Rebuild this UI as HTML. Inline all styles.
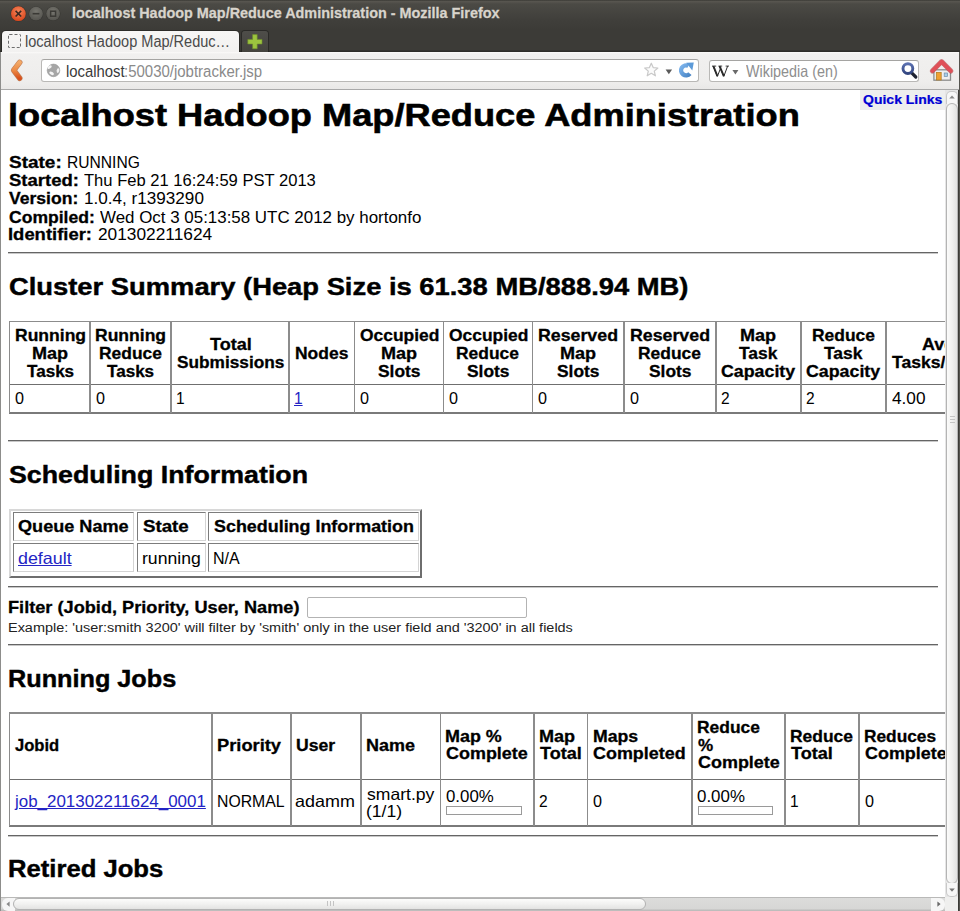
<!DOCTYPE html>
<html><head><meta charset="utf-8">
<title>localhost Hadoop Map/Reduce Administration</title>
<style>
html,body{margin:0;padding:0;width:960px;height:911px;overflow:hidden;background:#3c3b37;font-family:"Liberation Sans",sans-serif}
.b{position:absolute}
.t{position:absolute;white-space:pre;transform-origin:0 50%;font-family:"Liberation Sans",sans-serif}
.sv{position:absolute;overflow:visible}
#vp{position:absolute;left:1px;top:90px;width:944.4px;height:807px;overflow:hidden;background:#fff}
#pg{position:absolute;left:-1px;top:-90px;width:1100px;height:911px}
</style></head><body>
<!-- title bar -->
<div class="b" style="left:0;top:0;width:960px;height:52px;background:linear-gradient(#3a3935 0px,#57554f 1.5px,#4b4a45 4px,#403f3b 20px,#3c3b37 30px,#3c3b37 50px,#2e2d29 51px,#2e2d29 52px)"></div>
<!-- window buttons -->
<svg class="sv" style="left:0;top:0" width="70" height="30" viewBox="0 0 70 30">
 <defs>
  <radialGradient id="gc" cx="50%" cy="35%" r="65%"><stop offset="0" stop-color="#f7875c"/><stop offset="1" stop-color="#d8461c"/></radialGradient>
  <radialGradient id="gg" cx="50%" cy="35%" r="65%"><stop offset="0" stop-color="#77766f"/><stop offset="1" stop-color="#54534e"/></radialGradient>
 </defs>
 <circle cx="18.4" cy="13.7" r="7.9" fill="#2a2926" opacity="0.6"/>
 <circle cx="18.4" cy="13.7" r="7.4" fill="url(#gc)"/>
 <path d="M15.6 10.9 L21.2 16.5 M21.2 10.9 L15.6 16.5" stroke="#3b2a22" stroke-width="1.6"/>
 <circle cx="36" cy="13.7" r="7.3" fill="#2a2926" opacity="0.6"/>
 <circle cx="36" cy="13.7" r="6.9" fill="url(#gg)"/>
 <path d="M32.6 13.7 L39.4 13.7" stroke="#3a3935" stroke-width="1.6"/>
 <circle cx="53.1" cy="13.7" r="7.3" fill="#2a2926" opacity="0.6"/>
 <circle cx="53.1" cy="13.7" r="6.9" fill="url(#gg)"/>
 <rect x="50.6" y="11.2" width="5" height="5" fill="none" stroke="#3a3935" stroke-width="1.5"/>
</svg>
<!-- tab -->
<div class="b" style="left:2px;top:30.5px;width:237.4px;height:22px;border-radius:4px 4px 0 0;background:linear-gradient(#f7f6f5,#f2f1f0);box-shadow:0 0 0 1px rgba(30,30,28,0.5)"></div>
<div class="b" style="left:7.5px;top:34px;width:13.5px;height:13.5px;border:1.2px dashed #6d6d6d;box-sizing:border-box;border-radius:1.5px"></div>
<!-- new tab button -->
<div class="b" style="left:241.9px;top:30.6px;width:26.1px;height:21.4px;border-radius:3px 3px 0 0;background:linear-gradient(#4e4d49,#45443f);box-shadow:0 0 0 1px rgba(30,30,28,0.6)"></div>
<svg class="sv" style="left:246px;top:33px" width="18" height="18" viewBox="0 0 18 18">
 <path d="M6.6 1.6 H11.2 V6.4 H16 V11 H11.2 V15.8 H6.6 V11 H1.8 V6.4 H6.6 Z" fill="#9dc43f" stroke="#6f8f2a" stroke-width="0.6"/>
</svg>
<!-- nav bar -->
<div class="b" style="left:0;top:52px;width:960px;height:38px;background:linear-gradient(#fbfaf9 0px,#f1f0ef 2px,#eeedec 30px,#e9e8e7 37px,#a9a9a9 37px,#a9a9a9 38px)"></div>
<!-- back arrow -->
<svg class="sv" style="left:8px;top:58px" width="20" height="26" viewBox="0 0 20 26">
 <defs><linearGradient id="ga" x1="0" y1="0" x2="0" y2="1"><stop offset="0" stop-color="#f2a866"/><stop offset="0.5" stop-color="#ec8a45"/><stop offset="1" stop-color="#d8501c"/></linearGradient></defs>
 <path d="M11.7 4.4 L5.7 12.2 L11.7 20.2" fill="none" stroke="#b9683a" stroke-width="5.6" stroke-linecap="round" stroke-linejoin="round" opacity="0.85"/>
 <path d="M11.7 4.4 L5.7 12.2 L11.7 20.2" fill="none" stroke="url(#ga)" stroke-width="4.4" stroke-linecap="round" stroke-linejoin="round"/>
</svg>
<!-- url box -->
<div class="b" style="left:40.6px;top:59.4px;width:658.2px;height:22.6px;border:1px solid #b9b8b6;border-top-color:#a5a4a2;border-radius:3px;background:#fff;box-sizing:border-box"></div>
<svg class="sv" style="left:46px;top:63px" width="15" height="15" viewBox="0 0 15 15">
 <circle cx="7.5" cy="7.4" r="6.3" fill="#a6a6a6" stroke="#979797" stroke-width="0.6"/>
 <ellipse cx="3.6" cy="4.2" rx="2.4" ry="1.4" transform="rotate(-35 3.6 4.2)" fill="#f4f4f4"/>
 <ellipse cx="5.6" cy="10.3" rx="2.5" ry="1.5" transform="rotate(30 5.6 10.3)" fill="#f4f4f4"/>
 <ellipse cx="12" cy="7.6" rx="1.3" ry="2.4" transform="rotate(10 12 7.6)" fill="#f0f0f0"/>
</svg>
<!-- star, dropmarker, reload -->
<svg class="sv" style="left:643px;top:62px" width="17" height="17" viewBox="0 0 17 17">
 <path d="M8.3 1.2 L10.2 5.6 L14.9 6 L11.3 9.1 L12.4 13.8 L8.3 11.3 L4.2 13.8 L5.3 9.1 L1.7 6 L6.4 5.6 Z" fill="#fbfbfb" stroke="#c9c9c9" stroke-width="1.2" stroke-linejoin="round"/>
</svg>
<svg class="sv" style="left:664px;top:68px" width="10" height="8" viewBox="0 0 10 8">
 <path d="M1.6 1.6 H8.1 L4.85 6.3 Z" fill="#5a5a5a"/>
</svg>
<svg class="sv" style="left:677px;top:61px" width="19" height="19" viewBox="0 0 19 19">
 <defs><linearGradient id="gr" x1="0" y1="0" x2="1" y2="1"><stop offset="0" stop-color="#7db4ec"/><stop offset="1" stop-color="#4a86c6"/></linearGradient></defs>
 <path d="M12.9 12.6 A5 5 0 1 1 11.4 4.9" fill="none" stroke="url(#gr)" stroke-width="4.4" stroke-linecap="butt"/>
 <path d="M9.2 1.7 L16.8 1.6 L15.3 9.6 Z" fill="#5c9ad8"/>
</svg>
<!-- search box -->
<div class="b" style="left:709.2px;top:59.5px;width:210px;height:22.5px;border:1px solid #b9b8b6;border-top-color:#a5a4a2;border-radius:3px;background:#fff;box-sizing:border-box"></div>
<svg class="sv" style="left:731px;top:68px" width="10" height="8" viewBox="0 0 10 8">
 <path d="M1.4 2 H7.4 L4.4 6.6 Z" fill="#6a6a6a"/>
</svg>
<svg class="sv" style="left:899px;top:60px" width="21" height="21" viewBox="0 0 21 21">
 <defs><linearGradient id="gm" x1="0" y1="0" x2="0" y2="1"><stop offset="0" stop-color="#5b70b0"/><stop offset="1" stop-color="#334680"/></linearGradient></defs>
 <path d="M12.2 12.4 L16.8 17" stroke="#1f2433" stroke-width="3.2" stroke-linecap="round"/>
 <circle cx="8.9" cy="8.6" r="4.9" fill="#fff" stroke="url(#gm)" stroke-width="2.9"/>
</svg>
<svg class="sv" style="left:708px;top:60px" width="24" height="22" viewBox="708 60 24 22">
 <path d="M713.2 66.2 L717.4 76.4 M717.4 76.4 L720.8 67.6 M719.4 66.2 L723.8 76.4 M723.8 76.4 L727.6 66.2" stroke="#2a2a2a" stroke-width="1" fill="none"/>
 <path d="M713.4 66.2 L717.4 76.2 M719.6 66.2 L723.8 76.2" stroke="#2a2a2a" stroke-width="1.9" fill="none"/>
 <path d="M712 66.1 H716.2 M718.4 66.1 H722.2 M725.6 66.1 H729" stroke="#2a2a2a" stroke-width="0.9" fill="none"/>
</svg>
<!-- home -->
<svg class="sv" style="left:929px;top:58px" width="26" height="25" viewBox="0 0 26 25">
 <rect x="4.9" y="11.8" width="16.6" height="10.4" fill="#efefef" stroke="#8c8c8c" stroke-width="1.3"/>
 <rect x="7.3" y="14.4" width="4.9" height="7.6" fill="#f0a030" stroke="#b0781c" stroke-width="0.7"/>
 <rect x="15.2" y="15" width="3.4" height="3.4" fill="#a8d0ea" stroke="#6d8ea8" stroke-width="0.7"/>
 <path d="M3.3 13 L12.6 3.6 L21.9 13" fill="none" stroke="#a83238" stroke-width="5" stroke-linejoin="round" stroke-linecap="round" opacity="0.55"/>
 <path d="M3.5 12.9 L12.6 3.8 L21.7 12.9" fill="none" stroke="#df5058" stroke-width="4.1" stroke-linejoin="round" stroke-linecap="round"/>
</svg>
<!-- window side borders -->
<div class="b" style="left:0;top:52px;width:1px;height:859px;background:#8d8d8b"></div>
<div class="b" style="left:958.8px;top:52px;width:1.2px;height:859px;background:#55544f"></div>
<!-- vertical scrollbar -->
<div class="b" style="left:945.4px;top:90px;width:12.6px;height:807px;background:#e6e6e6"></div>
<div class="b" style="left:946.3px;top:90.5px;width:11.4px;height:13px;border:1px solid #c8c8c8;border-bottom:none;border-radius:5px 5px 0 0;box-sizing:border-box;background:#f7f7f7"></div>
<svg class="sv" style="left:946px;top:91px" width="12" height="12" viewBox="0 0 12 12"><path d="M3.2 7.6 H8.8 L6 4.6 Z" fill="#8a8a8a"/></svg>
<div class="b" style="left:946.3px;top:102.5px;width:11.6px;height:781px;border:1.2px solid #b4b4b4;border-radius:6px;box-sizing:border-box;background:linear-gradient(90deg,#fbfbfa,#f1f1f0 50%,#e2e2e1)"></div>
<div class="b" style="left:946.3px;top:883px;width:11.4px;height:14px;border:1px solid #c8c8c8;border-top:none;border-radius:0 0 5px 5px;box-sizing:border-box;background:#f7f7f7"></div>
<svg class="sv" style="left:946px;top:884px" width="12" height="12" viewBox="0 0 12 12"><path d="M3.2 4.6 H8.8 L6 7.8 Z" fill="#777"/></svg>
<!-- horizontal scrollbar -->
<div class="b" style="left:1px;top:897px;width:957px;height:14px;background:linear-gradient(#b9b9b8 0px,#b9b9b8 1px,#dcdcdb 1px,#d6d6d5 12px,#bdbdbc 13px,#bdbdbc 14px)"></div>
<div class="b" style="left:1.5px;top:898px;width:13px;height:13px;border-radius:6px 0 0 6px;background:#f6f6f6"></div>
<svg class="sv" style="left:2px;top:898px" width="12" height="12" viewBox="0 0 12 12"><path d="M7.6 3.4 V8.8 L4.4 6.1 Z" fill="#888"/></svg>
<div class="b" style="left:13px;top:897.6px;width:633px;height:12.8px;border:1.2px solid #b2b2b2;border-radius:6.5px;box-sizing:border-box;background:linear-gradient(#fcfcfb,#f1f1f0 50%,#e3e3e2)"></div>
<div class="b" style="left:931px;top:898px;width:14px;height:13px;border-radius:0 6px 6px 0;background:#f6f6f6"></div>
<svg class="sv" style="left:933px;top:898px" width="12" height="12" viewBox="0 0 12 12"><path d="M4.4 3.4 V8.8 L7.6 6.1 Z" fill="#6a6a6a"/></svg>
<div class="b" style="left:945.4px;top:897px;width:12.6px;height:14px;background:#efefee"></div>
<div class="b" style="left:950px;top:416px;width:5px;height:1px;background:#c4c4c4"></div>
<div class="b" style="left:950px;top:419px;width:5px;height:1px;background:#c4c4c4"></div>
<div class="b" style="left:950px;top:422px;width:5px;height:1px;background:#c4c4c4"></div>
<div class="b" style="left:327px;top:901px;width:1px;height:5px;background:#c4c4c4"></div>
<div class="b" style="left:330px;top:901px;width:1px;height:5px;background:#c4c4c4"></div>
<div class="b" style="left:333px;top:901px;width:1px;height:5px;background:#c4c4c4"></div>

<div class="t" style="left:72.33px;top:6.14px;font-size:14.84px;line-height:14.84px;transform:scaleX(0.9713);color:#d8d4cc;font-weight:bold;-webkit-text-stroke:0.27px #d8d4cc;">localhost Hadoop Map/Reduce Administration - Mozilla Firefox</div>
<div class="t" style="left:24.67px;top:33.82px;font-size:15.57px;line-height:15.57px;transform:scaleX(0.9336);color:#4a4a4a;">localhost Hadoop Map/Reduc…</div>
<div class="t" style="left:65.50px;top:63.25px;font-size:16.30px;line-height:16.30px;transform:scaleX(0.9128);color:#3a3a3a;">localhost</div>
<div class="t" style="left:124.22px;top:63.25px;font-size:16.30px;line-height:16.30px;transform:scaleX(0.9197);color:#8a8a8a;">:50030/jobtracker.jsp</div>
<div class="t" style="left:745.71px;top:64.23px;font-size:15.67px;line-height:15.67px;transform:scaleX(0.9163);color:#8e8e8e;">Wikipedia (en)</div>
<div id="vp"><div id="pg">
<div class="b" style="left:8.00px;top:251.90px;width:930.00px;height:1.00px;background:#656565"></div>
<div class="b" style="left:8.00px;top:252.90px;width:930.00px;height:0.80px;background:#c8c8c8"></div>
<div class="b" style="left:8.00px;top:440.00px;width:930.00px;height:1.00px;background:#656565"></div>
<div class="b" style="left:8.00px;top:441.00px;width:930.00px;height:0.80px;background:#c8c8c8"></div>
<div class="b" style="left:8.00px;top:586.40px;width:930.00px;height:1.00px;background:#656565"></div>
<div class="b" style="left:8.00px;top:587.40px;width:930.00px;height:0.80px;background:#c8c8c8"></div>
<div class="b" style="left:8.00px;top:643.60px;width:930.00px;height:1.00px;background:#656565"></div>
<div class="b" style="left:8.00px;top:644.60px;width:930.00px;height:0.80px;background:#c8c8c8"></div>
<div class="b" style="left:8.00px;top:834.80px;width:930.00px;height:1.00px;background:#656565"></div>
<div class="b" style="left:8.00px;top:835.80px;width:930.00px;height:0.80px;background:#c8c8c8"></div>
<div class="b" style="left:9.00px;top:320.75px;width:991.00px;height:1.50px;background:#8c8c8c"></div>
<div class="b" style="left:9.00px;top:412.00px;width:991.00px;height:1.50px;background:#7a7a7a"></div>
<div class="b" style="left:9.00px;top:384.00px;width:991.00px;height:1.30px;background:#6f6f6f"></div>
<div class="b" style="left:8.90px;top:321.25px;width:1.50px;height:91.75px;background:#8c8c8c"></div>
<div class="b" style="left:89.40px;top:321.25px;width:1.50px;height:91.75px;background:#8c8c8c"></div>
<div class="b" style="left:170.10px;top:321.25px;width:1.50px;height:91.75px;background:#8c8c8c"></div>
<div class="b" style="left:288.40px;top:321.25px;width:1.50px;height:91.75px;background:#8c8c8c"></div>
<div class="b" style="left:353.70px;top:321.25px;width:1.50px;height:91.75px;background:#8c8c8c"></div>
<div class="b" style="left:442.70px;top:321.25px;width:1.50px;height:91.75px;background:#8c8c8c"></div>
<div class="b" style="left:531.70px;top:321.25px;width:1.50px;height:91.75px;background:#8c8c8c"></div>
<div class="b" style="left:623.40px;top:321.25px;width:1.50px;height:91.75px;background:#8c8c8c"></div>
<div class="b" style="left:715.10px;top:321.25px;width:1.50px;height:91.75px;background:#8c8c8c"></div>
<div class="b" style="left:800.20px;top:321.25px;width:1.50px;height:91.75px;background:#8c8c8c"></div>
<div class="b" style="left:885.40px;top:321.25px;width:1.50px;height:91.75px;background:#8c8c8c"></div>
<div class="b" style="left:9.20px;top:508.70px;width:412.80px;height:69.20px;border-top:2px solid #d8d8d8;border-left:2px solid #d8d8d8;border-right:2px solid #6e6e6e;border-bottom:2px solid #6e6e6e;box-sizing:border-box"></div>
<div class="b" style="left:12.60px;top:511.90px;width:121.90px;height:29.30px;border-top:1px solid #7c7c7c;border-left:1px solid #7c7c7c;border-right:1px solid #d4d4d4;border-bottom:1px solid #d4d4d4;box-sizing:border-box"></div>
<div class="b" style="left:12.60px;top:542.80px;width:121.90px;height:29.40px;border-top:1px solid #7c7c7c;border-left:1px solid #7c7c7c;border-right:1px solid #d4d4d4;border-bottom:1px solid #d4d4d4;box-sizing:border-box"></div>
<div class="b" style="left:136.80px;top:511.90px;width:69.00px;height:29.30px;border-top:1px solid #7c7c7c;border-left:1px solid #7c7c7c;border-right:1px solid #d4d4d4;border-bottom:1px solid #d4d4d4;box-sizing:border-box"></div>
<div class="b" style="left:136.80px;top:542.80px;width:69.00px;height:29.40px;border-top:1px solid #7c7c7c;border-left:1px solid #7c7c7c;border-right:1px solid #d4d4d4;border-bottom:1px solid #d4d4d4;box-sizing:border-box"></div>
<div class="b" style="left:208.25px;top:511.90px;width:211.00px;height:29.30px;border-top:1px solid #7c7c7c;border-left:1px solid #7c7c7c;border-right:1px solid #d4d4d4;border-bottom:1px solid #d4d4d4;box-sizing:border-box"></div>
<div class="b" style="left:208.25px;top:542.80px;width:211.00px;height:29.40px;border-top:1px solid #7c7c7c;border-left:1px solid #7c7c7c;border-right:1px solid #d4d4d4;border-bottom:1px solid #d4d4d4;box-sizing:border-box"></div>
<div class="b" style="left:307.30px;top:597.30px;width:220.00px;height:21.00px;border:1px solid #b3b3b3;border-radius:2px;background:#fff;box-sizing:border-box"></div>
<div class="b" style="left:8.80px;top:712.20px;width:991.20px;height:1.50px;background:#8c8c8c"></div>
<div class="b" style="left:8.80px;top:825.00px;width:991.20px;height:1.50px;background:#7a7a7a"></div>
<div class="b" style="left:8.80px;top:778.50px;width:991.20px;height:1.30px;background:#6f6f6f"></div>
<div class="b" style="left:8.70px;top:712.70px;width:1.50px;height:113.30px;background:#8c8c8c"></div>
<div class="b" style="left:211.40px;top:712.70px;width:1.50px;height:113.30px;background:#8c8c8c"></div>
<div class="b" style="left:290.10px;top:712.70px;width:1.50px;height:113.30px;background:#8c8c8c"></div>
<div class="b" style="left:360.40px;top:712.70px;width:1.50px;height:113.30px;background:#8c8c8c"></div>
<div class="b" style="left:439.70px;top:712.70px;width:1.50px;height:113.30px;background:#8c8c8c"></div>
<div class="b" style="left:533.40px;top:712.70px;width:1.50px;height:113.30px;background:#8c8c8c"></div>
<div class="b" style="left:586.90px;top:712.70px;width:1.50px;height:113.30px;background:#8c8c8c"></div>
<div class="b" style="left:691.40px;top:712.70px;width:1.50px;height:113.30px;background:#8c8c8c"></div>
<div class="b" style="left:784.40px;top:712.70px;width:1.50px;height:113.30px;background:#8c8c8c"></div>
<div class="b" style="left:858.40px;top:712.70px;width:1.50px;height:113.30px;background:#8c8c8c"></div>
<div class="b" style="left:446.00px;top:806.00px;width:76.30px;height:9.30px;border:1px solid #9a9a9a;background:#fff;box-sizing:border-box"></div>
<div class="b" style="left:697.60px;top:806.00px;width:75.60px;height:8.80px;border:1px solid #9a9a9a;background:#fff;box-sizing:border-box"></div>
<div class="b" style="left:859.50px;top:90.00px;width:85.90px;height:19.90px;background:#eeeeee"></div>
<div class="t" style="left:7.86px;top:99.96px;font-size:31.35px;line-height:31.35px;transform:scaleX(1.1559);color:#000;font-weight:bold;-webkit-text-stroke:0.56px #000;">localhost Hadoop Map/Reduce Administration</div>
<div class="t" style="left:8.89px;top:155.43px;font-size:15.67px;line-height:15.67px;transform:scaleX(1.2127);color:#000;font-weight:bold;-webkit-text-stroke:0.28px #000;">State: </div>
<div class="t" style="left:66.99px;top:155.43px;font-size:15.67px;line-height:15.67px;transform:scaleX(0.9967);color:#000;">RUNNING</div>
<div class="t" style="left:8.91px;top:173.23px;font-size:15.67px;line-height:15.67px;transform:scaleX(1.1822);color:#000;font-weight:bold;-webkit-text-stroke:0.28px #000;">Started: </div>
<div class="t" style="left:84.07px;top:173.23px;font-size:15.67px;line-height:15.67px;transform:scaleX(1.0582);color:#000;">Thu Feb 21 16:24:59 PST 2013</div>
<div class="t" style="left:9.39px;top:191.23px;font-size:15.67px;line-height:15.67px;transform:scaleX(1.1214);color:#000;font-weight:bold;-webkit-text-stroke:0.28px #000;">Version: </div>
<div class="t" style="left:83.63px;top:191.23px;font-size:15.67px;line-height:15.67px;transform:scaleX(1.0932);color:#000;">1.0.4, r1393290</div>
<div class="t" style="left:8.83px;top:209.53px;font-size:15.67px;line-height:15.67px;transform:scaleX(1.1215);color:#000;font-weight:bold;-webkit-text-stroke:0.28px #000;">Compiled: </div>
<div class="t" style="left:99.65px;top:209.53px;font-size:15.67px;line-height:15.67px;transform:scaleX(1.0806);color:#000;">Wed Oct 3 05:13:58 UTC 2012 by hortonfo</div>
<div class="t" style="left:8.32px;top:227.23px;font-size:15.67px;line-height:15.67px;transform:scaleX(1.1770);color:#000;font-weight:bold;-webkit-text-stroke:0.28px #000;">Identifier: </div>
<div class="t" style="left:97.50px;top:227.23px;font-size:15.67px;line-height:15.67px;transform:scaleX(1.1044);color:#000;">201302211624</div>
<div class="t" style="left:8.59px;top:275.50px;font-size:23.51px;line-height:23.51px;transform:scaleX(1.1637);color:#000;font-weight:bold;-webkit-text-stroke:0.42px #000;">Cluster Summary (Heap Size is 61.38 MB/888.94 MB)</div>
<div class="t" style="left:8.70px;top:463.60px;font-size:23.51px;line-height:23.51px;transform:scaleX(1.1396);color:#000;font-weight:bold;-webkit-text-stroke:0.42px #000;">Scheduling Information</div>
<div class="t" style="left:7.68px;top:667.60px;font-size:23.51px;line-height:23.51px;transform:scaleX(1.0739);color:#000;font-weight:bold;-webkit-text-stroke:0.42px #000;">Running Jobs</div>
<div class="t" style="left:8.25px;top:858.40px;font-size:23.51px;line-height:23.51px;transform:scaleX(1.0908);color:#000;font-weight:bold;-webkit-text-stroke:0.42px #000;">Retired Jobs</div>
<div class="t" style="left:14.51px;top:327.73px;font-size:15.67px;line-height:15.67px;transform:scaleX(1.1195);color:#000;font-weight:bold;-webkit-text-stroke:0.28px #000;">Running</div>
<div class="t" style="left:31.71px;top:345.63px;font-size:15.67px;line-height:15.67px;transform:scaleX(1.1535);color:#000;font-weight:bold;-webkit-text-stroke:0.28px #000;">Map</div>
<div class="t" style="left:26.68px;top:363.53px;font-size:15.67px;line-height:15.67px;transform:scaleX(1.0896);color:#000;font-weight:bold;-webkit-text-stroke:0.28px #000;">Tasks</div>
<div class="t" style="left:95.11px;top:327.73px;font-size:15.67px;line-height:15.67px;transform:scaleX(1.1195);color:#000;font-weight:bold;-webkit-text-stroke:0.28px #000;">Running</div>
<div class="t" style="left:98.89px;top:345.63px;font-size:15.67px;line-height:15.67px;transform:scaleX(1.1126);color:#000;font-weight:bold;-webkit-text-stroke:0.28px #000;">Reduce</div>
<div class="t" style="left:107.28px;top:363.53px;font-size:15.67px;line-height:15.67px;transform:scaleX(1.0896);color:#000;font-weight:bold;-webkit-text-stroke:0.28px #000;">Tasks</div>
<div class="t" style="left:209.72px;top:336.73px;font-size:15.67px;line-height:15.67px;transform:scaleX(1.1541);color:#000;font-weight:bold;-webkit-text-stroke:0.28px #000;">Total</div>
<div class="t" style="left:176.51px;top:354.63px;font-size:15.67px;line-height:15.67px;transform:scaleX(1.1015);color:#000;font-weight:bold;-webkit-text-stroke:0.28px #000;">Submissions</div>
<div class="t" style="left:295.03px;top:345.73px;font-size:15.67px;line-height:15.67px;transform:scaleX(1.1147);color:#000;font-weight:bold;-webkit-text-stroke:0.28px #000;">Nodes</div>
<div class="t" style="left:359.62px;top:327.73px;font-size:15.67px;line-height:15.67px;transform:scaleX(1.1121);color:#000;font-weight:bold;-webkit-text-stroke:0.28px #000;">Occupied</div>
<div class="t" style="left:380.76px;top:345.63px;font-size:15.67px;line-height:15.67px;transform:scaleX(1.1535);color:#000;font-weight:bold;-webkit-text-stroke:0.28px #000;">Map</div>
<div class="t" style="left:377.89px;top:363.53px;font-size:15.67px;line-height:15.67px;transform:scaleX(1.1105);color:#000;font-weight:bold;-webkit-text-stroke:0.28px #000;">Slots</div>
<div class="t" style="left:448.62px;top:327.73px;font-size:15.67px;line-height:15.67px;transform:scaleX(1.1121);color:#000;font-weight:bold;-webkit-text-stroke:0.28px #000;">Occupied</div>
<div class="t" style="left:456.34px;top:345.63px;font-size:15.67px;line-height:15.67px;transform:scaleX(1.1126);color:#000;font-weight:bold;-webkit-text-stroke:0.28px #000;">Reduce</div>
<div class="t" style="left:466.89px;top:363.53px;font-size:15.67px;line-height:15.67px;transform:scaleX(1.1105);color:#000;font-weight:bold;-webkit-text-stroke:0.28px #000;">Slots</div>
<div class="t" style="left:538.40px;top:327.73px;font-size:15.67px;line-height:15.67px;transform:scaleX(1.1345);color:#000;font-weight:bold;-webkit-text-stroke:0.28px #000;">Reserved</div>
<div class="t" style="left:560.11px;top:345.63px;font-size:15.67px;line-height:15.67px;transform:scaleX(1.1535);color:#000;font-weight:bold;-webkit-text-stroke:0.28px #000;">Map</div>
<div class="t" style="left:557.24px;top:363.53px;font-size:15.67px;line-height:15.67px;transform:scaleX(1.1105);color:#000;font-weight:bold;-webkit-text-stroke:0.28px #000;">Slots</div>
<div class="t" style="left:630.10px;top:327.73px;font-size:15.67px;line-height:15.67px;transform:scaleX(1.1345);color:#000;font-weight:bold;-webkit-text-stroke:0.28px #000;">Reserved</div>
<div class="t" style="left:638.39px;top:345.63px;font-size:15.67px;line-height:15.67px;transform:scaleX(1.1126);color:#000;font-weight:bold;-webkit-text-stroke:0.28px #000;">Reduce</div>
<div class="t" style="left:648.94px;top:363.53px;font-size:15.67px;line-height:15.67px;transform:scaleX(1.1105);color:#000;font-weight:bold;-webkit-text-stroke:0.28px #000;">Slots</div>
<div class="t" style="left:740.21px;top:327.73px;font-size:15.67px;line-height:15.67px;transform:scaleX(1.1535);color:#000;font-weight:bold;-webkit-text-stroke:0.28px #000;">Map</div>
<div class="t" style="left:739.25px;top:345.63px;font-size:15.67px;line-height:15.67px;transform:scaleX(1.1122);color:#000;font-weight:bold;-webkit-text-stroke:0.28px #000;">Task</div>
<div class="t" style="left:721.15px;top:363.53px;font-size:15.67px;line-height:15.67px;transform:scaleX(1.1368);color:#000;font-weight:bold;-webkit-text-stroke:0.28px #000;">Capacity</div>
<div class="t" style="left:811.94px;top:327.73px;font-size:15.67px;line-height:15.67px;transform:scaleX(1.1126);color:#000;font-weight:bold;-webkit-text-stroke:0.28px #000;">Reduce</div>
<div class="t" style="left:824.40px;top:345.63px;font-size:15.67px;line-height:15.67px;transform:scaleX(1.1122);color:#000;font-weight:bold;-webkit-text-stroke:0.28px #000;">Task</div>
<div class="t" style="left:806.30px;top:363.53px;font-size:15.67px;line-height:15.67px;transform:scaleX(1.1368);color:#000;font-weight:bold;-webkit-text-stroke:0.28px #000;">Capacity</div>
<div class="t" style="left:921.69px;top:336.73px;font-size:15.67px;line-height:15.67px;transform:scaleX(1.1415);color:#000;font-weight:bold;-webkit-text-stroke:0.28px #000;">Avg.</div>
<div class="t" style="left:891.83px;top:354.63px;font-size:15.67px;line-height:15.67px;transform:scaleX(1.1219);color:#000;font-weight:bold;-webkit-text-stroke:0.28px #000;">Tasks/Node</div>
<div class="t" style="left:15.08px;top:391.03px;font-size:15.67px;line-height:15.67px;transform:scaleX(1.0336);color:#000;">0</div>
<div class="t" style="left:95.58px;top:391.03px;font-size:15.67px;line-height:15.67px;transform:scaleX(1.0336);color:#000;">0</div>
<div class="t" style="left:175.71px;top:391.03px;font-size:15.67px;line-height:15.67px;transform:scaleX(0.9900);color:#000;">1</div>
<div class="t" style="left:294.01px;top:391.03px;font-size:15.67px;line-height:15.67px;transform:scaleX(0.9900);color:#2424c4;text-decoration:underline;">1</div>
<div class="t" style="left:359.88px;top:391.03px;font-size:15.67px;line-height:15.67px;transform:scaleX(1.0336);color:#000;">0</div>
<div class="t" style="left:448.88px;top:391.03px;font-size:15.67px;line-height:15.67px;transform:scaleX(1.0336);color:#000;">0</div>
<div class="t" style="left:537.88px;top:391.03px;font-size:15.67px;line-height:15.67px;transform:scaleX(1.0336);color:#000;">0</div>
<div class="t" style="left:629.58px;top:391.03px;font-size:15.67px;line-height:15.67px;transform:scaleX(1.0336);color:#000;">0</div>
<div class="t" style="left:721.11px;top:391.03px;font-size:15.67px;line-height:15.67px;transform:scaleX(0.9917);color:#000;">2</div>
<div class="t" style="left:806.21px;top:391.03px;font-size:15.67px;line-height:15.67px;transform:scaleX(0.9917);color:#000;">2</div>
<div class="t" style="left:891.76px;top:391.03px;font-size:15.67px;line-height:15.67px;transform:scaleX(1.0995);color:#000;">4.00</div>
<div class="t" style="left:18.11px;top:518.53px;font-size:15.67px;line-height:15.67px;transform:scaleX(1.1563);color:#000;font-weight:bold;-webkit-text-stroke:0.28px #000;">Queue Name</div>
<div class="t" style="left:142.50px;top:518.53px;font-size:15.67px;line-height:15.67px;transform:scaleX(1.1950);color:#000;font-weight:bold;-webkit-text-stroke:0.28px #000;">State</div>
<div class="t" style="left:213.93px;top:518.53px;font-size:15.67px;line-height:15.67px;transform:scaleX(1.1434);color:#000;font-weight:bold;-webkit-text-stroke:0.28px #000;">Scheduling Information</div>
<div class="t" style="left:18.12px;top:550.53px;font-size:15.67px;line-height:15.67px;transform:scaleX(1.1401);color:#2424c4;text-decoration:underline;">default</div>
<div class="t" style="left:142.07px;top:550.53px;font-size:15.67px;line-height:15.67px;transform:scaleX(1.1252);color:#000;">running</div>
<div class="t" style="left:213.22px;top:550.53px;font-size:15.67px;line-height:15.67px;transform:scaleX(1.0241);color:#000;">N/A</div>
<div class="t" style="left:8.34px;top:600.33px;font-size:15.67px;line-height:15.67px;transform:scaleX(1.1606);color:#000;font-weight:bold;-webkit-text-stroke:0.28px #000;">Filter (Jobid, Priority, User, Name)</div>
<div class="t" style="left:8.28px;top:621.44px;font-size:13.06px;line-height:13.06px;transform:scaleX(1.1070);color:#222;">Example: 'user:smith 3200' will filter by 'smith' only in the user field and '3200' in all fields</div>
<div class="t" style="left:15.29px;top:737.53px;font-size:15.67px;line-height:15.67px;transform:scaleX(1.0602);color:#000;font-weight:bold;-webkit-text-stroke:0.28px #000;">Jobid</div>
<div class="t" style="left:217.03px;top:737.53px;font-size:15.67px;line-height:15.67px;transform:scaleX(1.1679);color:#000;font-weight:bold;-webkit-text-stroke:0.28px #000;">Priority</div>
<div class="t" style="left:295.89px;top:737.53px;font-size:15.67px;line-height:15.67px;transform:scaleX(1.1256);color:#000;font-weight:bold;-webkit-text-stroke:0.28px #000;">User</div>
<div class="t" style="left:366.05px;top:737.53px;font-size:15.67px;line-height:15.67px;transform:scaleX(1.1487);color:#000;font-weight:bold;-webkit-text-stroke:0.28px #000;">Name</div>
<div class="t" style="left:445.36px;top:728.68px;font-size:15.67px;line-height:15.67px;transform:scaleX(1.1446);color:#000;font-weight:bold;-webkit-text-stroke:0.28px #000;">Map %</div>
<div class="t" style="left:445.81px;top:746.48px;font-size:15.67px;line-height:15.67px;transform:scaleX(1.1462);color:#000;font-weight:bold;-webkit-text-stroke:0.28px #000;">Complete</div>
<div class="t" style="left:539.05px;top:728.68px;font-size:15.67px;line-height:15.67px;transform:scaleX(1.1535);color:#000;font-weight:bold;-webkit-text-stroke:0.28px #000;">Map</div>
<div class="t" style="left:539.97px;top:746.48px;font-size:15.67px;line-height:15.67px;transform:scaleX(1.1541);color:#000;font-weight:bold;-webkit-text-stroke:0.28px #000;">Total</div>
<div class="t" style="left:592.57px;top:728.68px;font-size:15.67px;line-height:15.67px;transform:scaleX(1.1286);color:#000;font-weight:bold;-webkit-text-stroke:0.28px #000;">Maps</div>
<div class="t" style="left:593.01px;top:746.48px;font-size:15.67px;line-height:15.67px;transform:scaleX(1.1446);color:#000;font-weight:bold;-webkit-text-stroke:0.28px #000;">Completed</div>
<div class="t" style="left:697.09px;top:719.83px;font-size:15.67px;line-height:15.67px;transform:scaleX(1.1126);color:#000;font-weight:bold;-webkit-text-stroke:0.28px #000;">Reduce</div>
<div class="t" style="left:697.76px;top:737.63px;font-size:15.67px;line-height:15.67px;transform:scaleX(1.0895);color:#000;font-weight:bold;-webkit-text-stroke:0.28px #000;">%</div>
<div class="t" style="left:697.51px;top:755.43px;font-size:15.67px;line-height:15.67px;transform:scaleX(1.1462);color:#000;font-weight:bold;-webkit-text-stroke:0.28px #000;">Complete</div>
<div class="t" style="left:790.09px;top:728.68px;font-size:15.67px;line-height:15.67px;transform:scaleX(1.1126);color:#000;font-weight:bold;-webkit-text-stroke:0.28px #000;">Reduce</div>
<div class="t" style="left:790.97px;top:746.48px;font-size:15.67px;line-height:15.67px;transform:scaleX(1.1541);color:#000;font-weight:bold;-webkit-text-stroke:0.28px #000;">Total</div>
<div class="t" style="left:864.10px;top:728.68px;font-size:15.67px;line-height:15.67px;transform:scaleX(1.1049);color:#000;font-weight:bold;-webkit-text-stroke:0.28px #000;">Reduces</div>
<div class="t" style="left:864.51px;top:746.48px;font-size:15.67px;line-height:15.67px;transform:scaleX(1.1446);color:#000;font-weight:bold;-webkit-text-stroke:0.28px #000;">Completed</div>
<div class="t" style="left:15.43px;top:794.23px;font-size:15.67px;line-height:15.67px;transform:scaleX(1.0817);color:#2424c4;text-decoration:underline;">job_201302211624_0001</div>
<div class="t" style="left:216.99px;top:794.23px;font-size:15.67px;line-height:15.67px;transform:scaleX(1.0077);color:#000;">NORMAL</div>
<div class="t" style="left:295.20px;top:794.23px;font-size:15.67px;line-height:15.67px;transform:scaleX(1.1462);color:#000;">adamm</div>
<div class="t" style="left:366.85px;top:786.83px;font-size:15.67px;line-height:15.67px;transform:scaleX(1.1223);color:#000;">smart.py</div>
<div class="t" style="left:366.18px;top:804.43px;font-size:15.67px;line-height:15.67px;transform:scaleX(1.1210);color:#000;">(1/1)</div>
<div class="t" style="left:446.05px;top:789.23px;font-size:15.67px;line-height:15.67px;transform:scaleX(1.0762);color:#000;">0.00%</div>
<div class="t" style="left:697.15px;top:789.23px;font-size:15.67px;line-height:15.67px;transform:scaleX(1.0789);color:#000;">0.00%</div>
<div class="t" style="left:539.41px;top:794.23px;font-size:15.67px;line-height:15.67px;transform:scaleX(0.9917);color:#000;">2</div>
<div class="t" style="left:593.08px;top:794.23px;font-size:15.67px;line-height:15.67px;transform:scaleX(1.0336);color:#000;">0</div>
<div class="t" style="left:790.01px;top:794.23px;font-size:15.67px;line-height:15.67px;transform:scaleX(0.9900);color:#000;">1</div>
<div class="t" style="left:864.58px;top:794.23px;font-size:15.67px;line-height:15.67px;transform:scaleX(1.0336);color:#000;">0</div>
<div class="t" style="left:863.48px;top:92.60px;font-size:13.58px;line-height:13.58px;transform:scaleX(1.0316);color:#0000d4;font-weight:bold;-webkit-text-stroke:0.24px #0000d4;">Quick Links</div>
</div></div>
</body></html>
